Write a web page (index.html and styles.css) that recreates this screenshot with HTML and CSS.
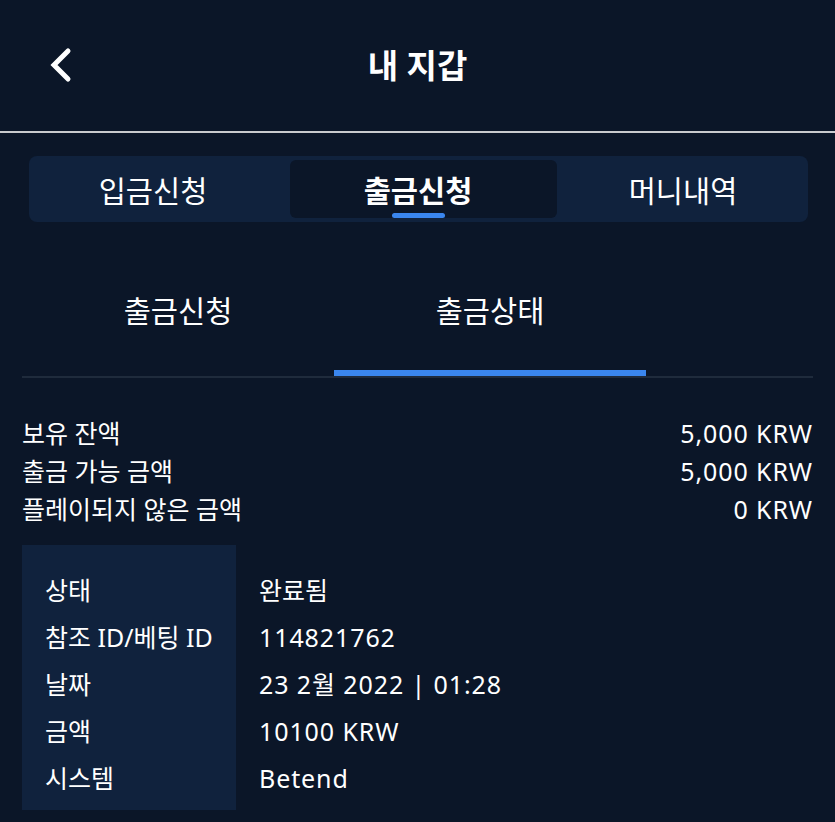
FILE: index.html
```html
<!DOCTYPE html>
<html lang="ko">
<head>
  <meta charset="UTF-8">
  <meta name="viewport" content="width=device-width, initial-scale=1.0">
  <title>내 지갑</title>
  <link rel="stylesheet" href="styles.css">
</head>
<body>
  <header class="topbar">
    <a class="back" href="#">
      <svg width="26" height="36" viewBox="0 0 26 36">
        <polyline points="20,4 6,18 20,32" fill="none" stroke="#fff" stroke-width="5" stroke-linecap="round" stroke-linejoin="miter"/>
      </svg>
    </a>
    <h1>내 지갑</h1>
  </header>

  <nav class="segment">
    <a class="seg-tab seg-first" href="#">입금신청</a>
    <a class="seg-tab seg-active" href="#">출금신청</a>
    <a class="seg-tab seg-last" href="#">머니내역</a>
  </nav>

  <div class="subtabs">
    <a class="subtab" href="#">출금신청</a>
    <a class="subtab active" href="#">출금상태</a>
  </div>

  <div class="balances">
    <div class="bal-row"><span>보유 잔액</span><span class="num">5,000 KRW</span></div>
    <div class="bal-row"><span>출금 가능 금액</span><span class="num">5,000 KRW</span></div>
    <div class="bal-row"><span>플레이되지 않은 금액</span><span class="num">0 KRW</span></div>
  </div>

  <div class="details">
    <div class="det-row"><div class="det-label">상태</div><div class="det-value">완료됨</div></div>
    <div class="det-row"><div class="det-label">참조 ID/베팅 ID</div><div class="det-value num">114821762</div></div>
    <div class="det-row"><div class="det-label">날짜</div><div class="det-value num">23 2월 2022 | 01:28</div></div>
    <div class="det-row"><div class="det-label">금액</div><div class="det-value num">10100 KRW</div></div>
    <div class="det-row"><div class="det-label">시스템</div><div class="det-value num">Betend</div></div>
  </div>
</body>
</html>
```

FILE: styles.css
```css
body {
  margin: 0;
  padding: 0;
  background-color: #0b1628;
  color: #fff;
  font-family: "Noto Sans", "Noto Sans CJK KR", sans-serif;
}
a {
  color: #fff;
  text-decoration: none;
}
.topbar {
  position: relative;
  height: 131px;
  display: flex;
  align-items: center;
  justify-content: center;
  border-bottom: 2px solid #c9cbce;
}
.topbar h1 {
  margin: 0;
  font-size: 33px;
  font-weight: 700;
  line-height: 40px;
}
.back {
  position: absolute;
  left: 48px;
  top: 47px;
  display: flex;
}
.segment {
  display: flex;
  margin: 23px 27px 0 29px;
  padding: 4px;
  height: 58px;
  background-color: #10223d;
  border-radius: 8px;
}
.seg-tab {
  display: flex;
  align-items: center;
  justify-content: center;
  box-sizing: border-box;
  font-size: 29.5px;
  border-radius: 6px;
  position: relative;
}
.seg-first {
  width: 257px;
  padding-right: 17px;
}
.seg-active {
  width: 267px;
  padding-right: 11px;
  background-color: #0b1628;
  font-weight: 700;
}
.seg-active::after {
  content: "";
  position: absolute;
  left: 102px;
  bottom: 0;
  width: 53px;
  height: 5px;
  border-radius: 3px;
  background-color: #3a86ee;
}
.seg-last {
  flex: 1;
  padding-left: 5px;
}
.subtabs {
  display: flex;
  margin: 0 22px;
  border-bottom: 2px solid #1f2b3c;
}
.subtab {
  width: 312px;
  padding: 70px 0 40px;
  text-align: center;
  font-size: 29.5px;
  line-height: 38px;
  border-bottom: 6px solid transparent;
}
.subtab.active {
  border-bottom-color: #3a86ee;
}
.balances {
  margin: 36px 22px 0;
}
.bal-row {
  display: flex;
  justify-content: space-between;
  font-size: 25px;
  line-height: 38px;
}
.num {
  letter-spacing: 0.9px;
}
.details {
  margin: 17px 22px 12px;
  padding: 22px 0 8px;
  width: 214px;
  background-color: #10223d;
}
.det-row {
  display: flex;
  font-size: 25px;
  line-height: 47px;
  white-space: nowrap;
}
.det-label {
  width: 214px;
  flex: none;
  padding-left: 23px;
  box-sizing: border-box;
}
.det-value {
  padding-left: 23px;
}
```
